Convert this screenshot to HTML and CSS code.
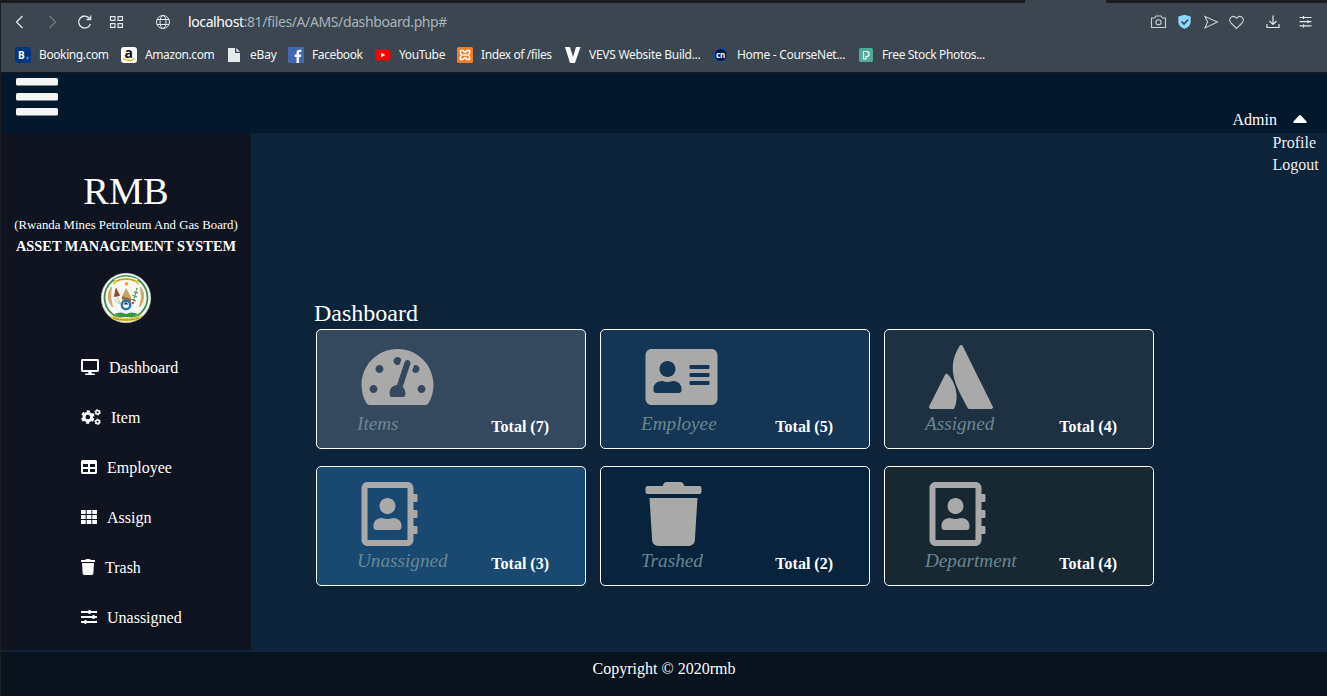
FILE: index.html
```
<!DOCTYPE html>
<html lang="en">
<head>
<meta charset="utf-8">
<title>Asset Management System</title>
<link rel="stylesheet" href="styles.css">
</head>
<body>
<svg class="defs" width="0" height="0">
  <symbol id="book" viewBox="0 0 448 512"><path d="M436 160c6.600 0 12-5.400 12-12v-40c0-6.600-5.400-12-12-12h-20V48c0-26.500-21.500-48-48-48H48C21.500 0 0 21.500 0 48v416c0 26.500 21.500 48 48 48h320c26.500 0 48-21.500 48-48v-48h20c6.600 0 12-5.400 12-12v-40c0-6.600-5.400-12-12-12h-20v-64h20c6.600 0 12-5.400 12-12v-40c0-6.600-5.400-12-12-12h-20v-64h20zm-68 304H48V48h320v416zM208 256c35.300 0 64-28.700 64-64s-28.700-64-64-64-64 28.700-64 64 28.700 64 64 64zm-89.600 128h179.200c12.400 0 22.400-8.600 22.400-19.200v-19.200c0-31.800-30.100-57.600-67.200-57.600-10.800 0-18.700 8-44.800 8-26.900 0-33.400-8-44.800-8-37.100 0-67.200 25.800-67.200 57.600v19.200c0 10.600 10 19.200 22.400 19.200z"/></symbol>
  <symbol id="trash" viewBox="0 0 448 512"><path d="M432 32H312l-9.400-18.700A24 24 0 0 0 281.100 0H166.800a23.720 23.720 0 0 0-21.400 13.300L136 32H16A16 16 0 0 0 0 48v32a16 16 0 0 0 16 16h416a16 16 0 0 0 16-16V48a16 16 0 0 0-16-16zM53.200 467a48 48 0 0 0 47.900 45h245.800a48 48 0 0 0 47.900-45L416 128H32z"/></symbol>
</svg>
<div class="window">
  <div class="tabstrip"><span class="tab"></span></div>
  <div class="chrome">
    <div class="toolbar">
      <svg width="170" height="38" viewBox="0 0 170 38" fill="none" stroke="#e4e8ea" stroke-width="1.300">
        <path d="M22.500 13l-6 6 6 6"/>
        <path d="M49.500 13l6 6-6 6" stroke="#6f7a83"/>
        <path d="M89.600 15.500a6 6 0 1 0 .8 5.500M90.600 12.500v4h-4"/>
        <path d="M110.500 13.600h4.500v3.800h-4.500zM118 13.600h4.500v3.800H118zM110.500 20.600h4.500v3.800h-4.500zM118 20.600h4.500v3.800H118z" stroke-width="1.100"/>
        <g stroke-width="1"><circle cx="163" cy="19" r="6.500"/><ellipse cx="163" cy="19" rx="3" ry="6.500"/><path d="M157 16.500h12M157 21.500h12"/></g>
      </svg>
      <div class="url"><b>localhost</b>:81/files/A/AMS/dashboard.php#</div>
      <svg width="170" height="38" viewBox="0 0 170 38" fill="none" stroke="#c9cfd3" stroke-width="1.100">
        <path d="M.5 15h3l1.500-2h5l1.500 2h3v9.500H.5z"/><circle cx="7.500" cy="19.300" r="2.600"/>
        <path d="M33.500 11.800l6.200 1.800v5c0 4-3 6-6.200 7.400-3.200-1.400-6.200-3.400-6.200-7.400v-5z" fill="#8fd7fb" stroke="none"/><path d="M30.500 18.500l2.500 2.500 4-4.300" stroke="#34414c" stroke-width="1.600"/>
        <path d="M54 13.500l12.500 5.500L54 25l2.500-6z"/>
        <path d="M85.500 25.500l-5.500-5.500c-4-4.500 1.800-9 5.500-4.800 3.700-4.200 9.500.3 5.500 4.800z"/>
        <path d="M122 12.500v9M118.500 18l3.500 3.500 3.500-3.500M116 21v3.500h12V21" stroke="#e4e8ea" stroke-width="1.200"/>
        <path d="M148.500 14.500h12M148.500 18.700h12M148.500 22.900h12M152.500 13v3M157 17.200v3M152.500 21.400v3" stroke="#e4e8ea" stroke-width="1.200"/>
      </svg>
    </div>
    <div class="bookmarks">
      <div class="bm b1"><svg width="16" height="16"><rect width="16" height="16" rx="3" fill="#003580"/><text x="3" y="12" class="ic" fill="#fff">B</text><circle cx="12.500" cy="11" r="1.200" fill="#19a8e8"/></svg><span>Booking.com</span></div>
      <div class="bm b2"><svg width="16" height="16"><rect width="16" height="16" rx="3" fill="#fff"/><text x="3.500" y="10.500" class="am" fill="#111">a</text><path d="M2.500 11.500q5.500 4 11 0" fill="none" stroke="#f90" stroke-width="1.400"/></svg><span>Amazon.com</span></div>
      <div class="bm b3"><svg width="12" height="16"><path d="M0 1h7v5h5v9H0zM8.300 1L12 4.800H8.300z" fill="#e6e9eb"/></svg><span>eBay</span></div>
      <div class="bm b4"><svg width="16" height="16"><rect width="16" height="16" fill="#4267b2"/><path d="M8.500 16V10H6.700V7.500h1.800V6c0-2 1.100-3.200 3-3.200h1.800v2.300h-1.200c-.9 0-1.100.4-1.100 1.200v1.200h2.200l-.3 2.500H11v6z" fill="#fff"/></svg><span>Facebook</span></div>
      <div class="bm b5"><svg width="16" height="16"><rect y="2.500" width="15.500" height="11" rx="2.800" fill="#f00"/><path d="M6.200 5.700v4.600l4-2.300z" fill="#fff"/></svg><span>YouTube</span></div>
      <div class="bm b6"><svg width="16" height="16"><rect width="16" height="16" rx="1.500" fill="#ef7d2b"/><path d="M3.500 3.500h2.300L8 5.500l2.200-2h2.300v3L11 8l1.500 1.500v3h-2.300L8 10.500l-2.200 2H3.500v-3L5 8 3.500 6.500z" fill="none" stroke="#fff" stroke-width="1.600" stroke-linejoin="round"/><path d="M6 8h4" stroke="#fff" stroke-width="1.500"/></svg><span>Index of /files</span></div>
      <div class="bm b7"><svg width="16" height="16"><path d="M0 0h5l3 10 3-10h4.500L10 16H5z" fill="#fff"/></svg><span>VEVS Website Build...</span></div>
      <div class="bm b8"><svg width="16" height="16"><circle cx="7.700" cy="8" r="6.500" fill="#061a40" stroke="#1552b5"/><text x="3" y="10.500" class="cn" fill="#fff">cn</text></svg><span>Home - CourseNet...</span></div>
      <div class="bm b9"><svg width="14" height="16"><rect y="1" width="14" height="14" rx="1.500" fill="#4faa9b"/><path d="M4.500 12V4.500h3a2.300 2.300 0 0 1 0 5.200H7V12z" fill="none" stroke="#fff" stroke-width="1.200"/></svg><span>Free Stock Photos...</span></div>
    </div>
  </div>
  <header class="header">
    <svg width="42" height="38" fill="#f5f5f5"><rect width="42" height="7.500" rx="1.500"/><rect y="15" width="42" height="7.500" rx="1.500"/><rect y="30" width="42" height="7.500" rx="1.500"/></svg>
    <div class="account"><span>Admin</span><svg width="14" height="10" viewBox="0 0 14 10"><path d="M1 8h12q1.300-.3.500-1.400L8 .5q-1-.8-2 0L.5 6.600Q-.3 7.700 1 8z" fill="#fff"/></svg>
      <div class="menu"><a>Profile</a><a>Logout</a></div>
    </div>
  </header>
  <div class="body">
    <aside class="sidebar">
      <h1>RMB</h1>
      <p class="full">(Rwanda Mines Petroleum And Gas Board)</p>
      <p class="system">ASSET MANAGEMENT SYSTEM</p>
      <svg class="seal" width="50" height="50" viewBox="0 0 50 50" fill="none">
        <circle cx="25" cy="25" r="24.700" fill="#f8f8f5" stroke="#c4c8c4" stroke-width=".7"/>
        <circle cx="25" cy="24.500" r="21.500" stroke="#3d9150" stroke-width="1.800"/>
        <path d="M14 8q11-5 22 0" stroke="#f8f8f5" stroke-width="4"/><path d="M14 8.500q11-5 22 0l1 3M14 8.500l-1 3" stroke="#e5c62f" stroke-width="2"/><path d="M16 8q9-4 18 0" stroke="#5a5527" stroke-width=".8" stroke-dasharray="1 .7"/>
        <circle cx="25.500" cy="10.800" r="1.900" fill="#f4a72a"/>
        <path d="M10.500 14q-7 10 1 20q-3.500-10-1-20zM39.500 14q7 10-1 20q3.500-10 1-20z" fill="#d2a568" stroke="#d2a568"/>
        <path d="M25 15l5 9v5h-9v-5z" fill="#c9a25f"/><path d="M21 24.500l9 3" stroke="#8a6d4a" stroke-width="2.500"/>
        <path d="M15 15.500l3.500 7-5 1z" fill="#8f4c2e" stroke="#8f4c2e"/><path d="M16 24l4 7M13 26l6 5" stroke="#8dbf8c" stroke-width=".8"/>
        <path d="M36 15l-4 16M37 20l-4-1M36 24l-5-2M35 28l-5-2" stroke="#3b9148" stroke-width="1.200" stroke-dasharray="2 .8"/><circle cx="31.500" cy="30" r="1" fill="#c73b4a"/>
        <circle cx="25" cy="32" r="4.200" fill="#fff" stroke="#2476ad" stroke-width="2.500"/><path d="M22.500 31.500h5L25 29z" fill="#19283c"/>
        <path d="M13 41q7-3 12 0 5-3 12 0l-5 3H18z" fill="#379447"/>
        <path d="M9 42q16 6 32 0l-2 4q-14 5-28 0z" fill="#e8d449"/><path d="M12 45q13 4 26 0" stroke="#665e25" stroke-width="1" stroke-dasharray="1.500 .8"/>
      </svg>
      <nav>
        <a><svg width="18" height="16" viewBox="0 0 576 512"><path d="M528 0H48C21.500 0 0 21.500 0 48v320c0 26.500 21.500 48 48 48h192l-16 48h-72c-13.300 0-24 10.700-24 24s10.700 24 24 24h272c13.300 0 24-10.700 24-24s-10.700-24-24-24h-72l-16-48h192c26.500 0 48-21.500 48-48V48c0-26.500-21.500-48-48-48zm-16 352H64V64h448v288z"/></svg><span>Dashboard</span></a>
        <a><svg width="20" height="16"><g fill="none" stroke="#fff"><circle cx="6.800" cy="8" r="3.800" stroke-width="3"/><circle cx="6.800" cy="8" r="5.800" stroke-width="2" stroke-dasharray="3.300 2.774" stroke-dashoffset="-1.300"/><circle cx="16.600" cy="3.200" r="1.800" stroke-width="1.500"/><circle cx="16.600" cy="3.200" r="2.800" stroke-width="1" stroke-dasharray="1.500 1.432"/><circle cx="16.600" cy="12.800" r="1.800" stroke-width="1.500"/><circle cx="16.600" cy="12.800" r="2.800" stroke-width="1" stroke-dasharray="1.500 1.432"/></g></svg><span>Item</span></a>
        <a><svg width="16" height="16" viewBox="0 0 512 512"><path d="M464 32H48C21.500 32 0 53.500 0 80v352c0 26.500 21.500 48 48 48h416c26.500 0 48-21.500 48-48V80c0-26.500-21.500-48-48-48zM224 416H64v-96h160v96zm0-160H64v-96h160v96zm224 160H288v-96h160v96zm0-160H288v-96h160v96z"/></svg><span>Employee</span></a>
        <a><svg width="16" height="16"><path d="M0 1h4.700v4H0zM5.700 1h4.700v4H5.700zM11.300 1H16v4h-4.700zM0 6h4.700v4H0zM5.700 6h4.700v4H5.700zM11.300 6H16v4h-4.700zM0 11h4.700v4H0zM5.700 11h4.700v4H5.700zM11.300 11H16v4h-4.700z"/></svg><span>Assign</span></a>
        <a><svg width="14" height="16"><use href="#trash"/></svg><span>Trash</span></a>
        <a><svg width="16" height="16"><path d="M0 2h7.500V1h2v1H16v2H9.500v1h-2V4H0zM0 7h11.500V6h2v1H16v2h-2.500v1h-2V9H0zM0 12h3.500v-1h2v1H16v2H5.500v1h-2v-1H0z"/></svg><span>Unassigned</span></a>
      </nav>
    </aside>
    <main class="main">
      <h2>Dashboard</h2>
      <div class="cards">
        <div class="card c1"><svg width="73" height="64" viewBox="0 0 576 512"><path d="M288 32C128.940 32 0 160.940 0 320c0 52.800 14.250 102.260 39.060 144.800 5.610 9.620 16.300 15.200 27.440 15.200h443c11.140 0 21.830-5.580 27.440-15.200C561.750 422.260 576 372.800 576 320c0-159.060-128.940-288-288-288zm0 64c14.710 0 26.580 10.130 30.320 23.650-1.110 2.260-2.640 4.230-3.450 6.670l-9.220 27.670c-5.130 3.490-10.970 6.010-17.640 6.010-17.670 0-32-14.330-32-32S270.330 96 288 96zM96 384c-17.670 0-32-14.330-32-32s14.330-32 32-32 32 14.330 32 32-14.330 32-32 32zm48-160c-17.670 0-32-14.330-32-32s14.330-32 32-32 32 14.330 32 32-14.330 32-32 32zm246.770-72.410l-61.330 184C343.130 347.330 352 364.540 352 384c0 11.720-3.380 22.550-8.880 32H232.880c-5.500-9.450-8.880-20.280-8.880-32 0-33.940 26.500-61.430 59.900-63.590l61.340-184.010c4.170-12.560 17.730-19.450 30.360-15.170 12.570 4.190 19.350 17.790 15.170 30.360zm14.660 57.200l15.520-46.550c3.470-1.290 7.130-2.230 11.050-2.230 17.670 0 32 14.330 32 32s-14.330 32-32 32c-11.380-.01-20.890-6.280-26.570-15.220zM480 384c-17.670 0-32-14.330-32-32s14.330-32 32-32 32 14.330 32 32-14.330 32-32 32z"/></svg><div class="row"><em>Items</em><b>Total (7)</b></div></div>
        <div class="card c2"><svg width="73" height="64" viewBox="0 0 576 512"><path fill-rule="evenodd" d="M528 32H48C21.500 32 0 53.500 0 80v352c0 26.500 21.500 48 48 48h480c26.500 0 48-21.500 48-48V80c0-26.500-21.500-48-48-48zm-352 96c35.300 0 64 28.700 64 64s-28.700 64-64 64-64-28.700-64-64 28.700-64 64-64zm112 236.800c0 10.600-10 19.200-22.400 19.200H86.400C74 384 64 375.400 64 364.800v-19.200c0-31.800 30.100-57.600 67.200-57.600h5c12.300 5.100 25.700 8 39.800 8s27.600-2.900 39.800-8h5c37.100 0 67.200 25.800 67.200 57.600zM360 288h144q8 0 8 8v16q0 8-8 8H360q-8 0-8-8v-16q0-8 8-8zM360 224h144q8 0 8 8v16q0 8-8 8H360q-8 0-8-8v-16q0-8 8-8zM360 160h144q8 0 8 8v16q0 8-8 8H360q-8 0-8-8v-16q0-8 8-8z"/></svg><div class="row"><em>Employee</em><b>Total (5)</b></div></div>
        <div class="card c3"><svg width="64" height="64" viewBox="0 0 512 512"><path d="M152.200 236.400c-7.700-8.200-19.700-7.700-24.800 2.800L1.600 490.200c-5 10 2.400 21.700 13.400 21.700h175c5.800.1 11-3.200 13.400-8.400 37.900-77.800 15.100-196.300-51.200-267.100zM244.400 8.100c-122.300 193.400-8.500 348.600 65 495.500 2.500 5.100 7.700 8.400 13.400 8.400H497c11.200 0 18.400-11.800 13.400-21.700 0 0-234.500-470.600-240.400-482.300-5.300-10.600-18.800-10.800-25.600.1z"/></svg><div class="row"><em>Assigned</em><b>Total (4)</b></div></div>
        <div class="card c4"><svg width="57" height="64"><use href="#book"/></svg><div class="row"><em>Unassigned</em><b>Total (3)</b></div></div>
        <div class="card c5"><svg width="57" height="64"><use href="#trash"/></svg><div class="row"><em>Trashed</em><b>Total (2)</b></div></div>
        <div class="card c6"><svg width="57" height="64"><use href="#book"/></svg><div class="row"><em>Department</em><b>Total (4)</b></div></div>
      </div>
    </main>
  </div>
  <footer>Copyright © 2020rmb</footer>
</div>
</body>
</html>
```
FILE: styles.css
```
* { box-sizing: border-box; }
body { margin: 0; height: 698px; overflow: hidden; background: #fff; font: 16px/18px "Liberation Serif", "Times New Roman", serif; color: #fff; }
svg { display: block; flex: none; overflow: visible; }
.defs { position: absolute; }
h1, h2, p { margin: 0; font-weight: normal; }
.window { height: 696px; border-left: 1px solid #1b1d20; display: flex; flex-direction: column; background: #0d2339; }
.tabstrip { height: 3px; background: #1a1c1f; padding-left: 1024px; }
.tab { display: block; width: 81px; height: 3px; background: #3b4650; }
.chrome { height: 70px; background: #3b4650; border-bottom: 1px solid #17191c; font-family: "Noto Sans", sans-serif; color: #f2f4f5; }
.toolbar { height: 38px; display: flex; align-items: center; margin-left: -1px; }
.url { flex: none; width: 981px; padding-left: 18px; font-size: 14px; letter-spacing: -0.39px; color: #a9b3ba; white-space: nowrap; }
.url b { font-weight: normal; color: #fff; }
.bookmarks { height: 28px; display: flex; align-items: center; padding-left: 14px; }
.bm { display: flex; align-items: center; gap: 8px; font-size: 12px; white-space: nowrap; letter-spacing: -0.4px; }
.b1 { width: 106px; } .b2 { width: 107px; } .b3 { width: 60px; gap: 10px; letter-spacing: -0.7px; } .b4 { width: 87px; } .b5 { width: 82px; }
.b3 { letter-spacing: -0.7px; } .b5 { letter-spacing: -0.35px; } .b6 { width: 108px; } .b7 { width: 148px; letter-spacing: -0.28px; } .b8 { width: 146px; letter-spacing: -0.3px; } .b9 { gap: 9px; letter-spacing: -0.36px; }
.b3 { letter-spacing: -0.7px; letter-spacing: -0.2px; }
.ic { font: bold 10px "Open Sans", sans-serif; letter-spacing: 0; }
.am { font: bold 14px "Open Sans", sans-serif; letter-spacing: 0; }
.cn { font: bold 8px "Open Sans", sans-serif; letter-spacing: 0; }
.header { height: 60px; background: #03182c; display: flex; justify-content: space-between; align-items: flex-start; padding: 5px 20px 0 15px; }
.account { position: relative; display: flex; align-items: center; gap: 16px; margin-top: 33px; }
.menu { position: absolute; left: 40px; top: 21px; display: grid; line-height: 22px; color: #ececec; }
.body { height: 519px; display: flex; }
.sidebar { width: 250px; height: 517px; background: #0f1420; text-align: center; padding-top: 36px; }
.sidebar h1 { font-size: 38.4px; line-height: 44px; }
.full { font-size: 12.8px; line-height: 22px; padding-top: 1px; white-space: nowrap; }
.system { font-size: 14.4px; line-height: 20px; font-weight: bold; }
.seal { margin: 17px auto 19px; }
nav { padding-left: 80px; }
nav a { height: 50px; display: flex; align-items: center; gap: 10px; }
nav span { padding-top: 2px; }
nav svg { fill: #fff; }
.main { flex: 1; padding: 168px 0 0 63px; }
h2 { font-size: 24px; line-height: 24px; }
.cards { padding: 4px 0 0 2px; display: grid; grid-template-columns: repeat(3, 270px); gap: 17px 14px; }
.card { height: 120px; border: 1px solid #fff; border-radius: 5px; padding: 15px 36px 0 44px; }
.card svg { fill: #a9a9a9; }
.row { display: flex; justify-content: space-between; margin-left: -4px; line-height: 22px; padding-top: 4px; }
.row em { font-size: 19.2px; color: #6a8791; }
.row b { padding-top: 3px; }
.c1 { background: #34495e; } .c2 { background: #143654; } .c3 { background: #1d3142; }
.c4 { background: #194971; } .c5 { background: #07243c; } .c6 { background: #182832; }
footer { height: 44px; background: #08131d; text-align: center; padding-top: 8px; }
```
